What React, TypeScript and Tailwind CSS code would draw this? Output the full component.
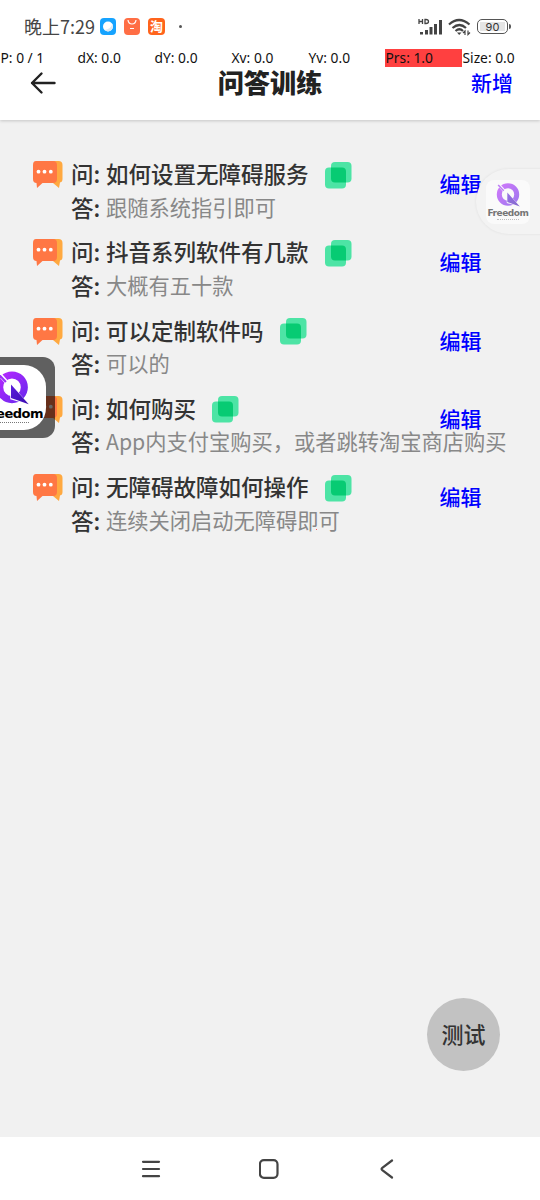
import React from "react";

const items = [
  { q: "如何设置无障碍服务", a: "跟随系统指引即可" },
  { q: "抖音系列软件有几款", a: "大概有五十款" },
  { q: "可以定制软件吗", a: "可以的" },
  { q: "如何购买", a: "App内支付宝购买，或者跳转淘宝商店购买" },
  { q: "无障碍故障如何操作", a: "连续关闭启动无障碍即可" },
];

const metrics = ["P: 0 / 1", "dX: 0.0", "dY: 0.0", "Xv: 0.0", "Yv: 0.0", "Prs: 1.0", "Size: 0.0"];

function ChatIcon() {
  return (
    <svg className="block h-[30px] w-[31px]" viewBox="0 0 31 30">
      <path d="M15 1h11.500q4 0 4 4v14q0 3-2.500 3.500l-1 5.500-6-5H15z" fill="#ffa940" />
      <path d="M4 1h17q4 0 4 4v14q0 4-4 4H10.500L5 28 4.500 23Q1 23 1 19V5q0-4 3-4z" fill="#ff7744" />
      <circle cx="6.500" cy="11.700" r="1.900" fill="#fff" />
      <circle cx="12.500" cy="11.700" r="1.900" fill="#fff" />
      <circle cx="18.800" cy="11.700" r="1.900" fill="#fff" />
    </svg>
  );
}

function CopyIcon() {
  return (
    <svg className="block h-[28px] w-[27px]" viewBox="0 0 27 28">
      <rect x="6" y="1" width="20.500" height="20.500" rx="4" fill="#4de4a5" />
      <rect x="0" y="6.500" width="21" height="21" rx="4" fill="#4de4a5" />
      <path d="M6 6.500h11q4 0 4 4v11H10q-4 0-4-4z" fill="#07cb73" />
    </svg>
  );
}

function Logo({ className }: { className: string }) {
  return (
    <svg className={className} viewBox="0 0 24 24">
      <defs>
        <linearGradient id="ring" x1="0" y1="0" x2="1" y2="1">
          <stop offset="0" stopColor="#b428ff" />
          <stop offset="1" stopColor="#6d28ee" />
        </linearGradient>
        <linearGradient id="tail" x1="0" y1="0" x2="1" y2="1">
          <stop offset="0" stopColor="#5a1cdc" />
          <stop offset="1" stopColor="#3a0cb0" />
        </linearGradient>
      </defs>
      <circle cx="12" cy="11.500" r="8.700" fill="none" stroke="url(#ring)" strokeWidth="5" />
      <path d="M2.500 1.500l8 9" stroke="#fff" strokeWidth="2.800" />
      <path d="M2.200 2l5.500 5.800" stroke="#9a30f8" strokeWidth="1.500" />
      <path d="M10.500 8L24 23.800 10.800 20z" fill="#fff" />
      <path d="M11.300 9.500L23.800 23.500 11.300 19z" fill="url(#tail)" />
    </svg>
  );
}

function StatusBar() {
  return (
    <div className="flex h-[48px] items-center pt-[5px] pl-[24px] pr-[29px] text-[#454545]">
      <span className="mt-[-2px] w-[71px] text-[18px] leading-[24px] whitespace-nowrap">晚上7:29</span>
      <svg className="ml-[5px] h-[17px] w-[16px]" viewBox="0 0 16 17">
        <rect width="16" height="17" rx="4" fill="#16a3ff" />
        <circle cx="8" cy="8.500" r="5" fill="#fff" />
        <path d="M4.500 12Q11 11 12.500 5.500 14 13 8 13.500z" fill="#dce9f4" />
      </svg>
      <svg className="ml-[8px] h-[17px] w-[16px]" viewBox="0 0 16 17">
        <rect width="16" height="17" rx="4" fill="#ff6e45" />
        <path d="M4 2q.5 4 4 4t4-4M6 10.500h4" fill="none" stroke="#fff" strokeWidth="1.200" />
      </svg>
      <div className="ml-[8px] flex h-[17px] w-[17px] items-center justify-center rounded-[4px] bg-[#ff641c] pb-[3px] text-[13px] leading-[13px] font-bold text-white">淘</div>
      <span className="ml-[14px] h-[3px] w-[3px] rounded-full bg-[#555]" />
      <svg className="ml-auto h-[18px] w-[25px]" viewBox="0 0 25 18">
        <path d="M1 1v5M4.500 1v5M1 3.500h3.500M7 1.500v4h1q2.500 0 2.500-2T8 1.500z" fill="none" stroke="#444" strokeWidth="1.300" />
        <path d="M2 14h3v2.500H2zM7 12h3v4.500H7zM11.500 9h3v7.500h-3zM16 6h3v10.500h-3zM21 2h3v14.500h-3z" fill="#444" />
      </svg>
      <svg className="ml-[5px] h-[18px] w-[23px]" viewBox="0 0 23 18">
        <path d="M1 6.500q10-9 20.500 0M4.500 10q7-6 13.500 0M7.500 13q4-3.500 7.500 0" fill="none" stroke="#444" strokeWidth="2.200" />
        <path d="M9 14.500h4.500L11.200 17z" fill="#444" />
        <path d="M17 17v-4l-2 2M20 12.500v4l2-2" fill="none" stroke="#444" strokeWidth="1.200" />
      </svg>
      <div className="ml-[6px] flex h-[15px] w-[31px] items-center justify-center rounded-[5px] border-[1.500px] border-[#555] bg-white p-[2px]">
        <span className="h-full w-full bg-[#e5e5e5] text-center font-['Inter',sans-serif] text-[11px] leading-[10px] text-[#333]">90</span>
      </div>
      <span className="ml-px h-[5px] w-[2px] rounded-r bg-[#555]" />
    </div>
  );
}

export default function App() {
  return (
    <div className="relative flex h-[1200px] w-[540px] flex-col overflow-hidden bg-[#f1f1f1] font-['Noto_Sans_CJK_SC',sans-serif] text-[#333]">
      <header className="z-10 h-[120px] shrink-0 bg-white shadow-[0_1px_3px_rgba(0,0,0,0.18)]">
        <StatusBar />
        <div className="mt-[15px] grid h-[40px] grid-cols-3 items-center pr-[27px] pl-[30px]">
          <svg className="h-[24px] w-[26px]" viewBox="0 0 26 24" fill="none" stroke="#222" strokeWidth="2.400" strokeLinecap="round" strokeLinejoin="round">
            <path d="M24.500 12H2M11.500 2.500L2 12l9.500 9.500" />
          </svg>
          <h1 className="mt-[-3px] ml-[-3px] text-center text-[26.200px] leading-[38px] font-black whitespace-nowrap text-[#222]">问答训练</h1>
          <button className="mt-[-3px] justify-self-end text-[21px] leading-[30px] font-medium whitespace-nowrap text-[#0000ff]">新增</button>
        </div>
      </header>

      <div className="absolute top-[49px] left-0 z-20 flex h-[18px] w-[540px] font-['Noto_Sans',sans-serif] text-[13.800px] leading-[18px] text-[#111]">
        {metrics.map((m) => (
          <span key={m} className={m.startsWith("Prs") ? "w-[77px] shrink-0 bg-[#ff4040] pl-[0.500px] whitespace-nowrap" : "w-[77px] shrink-0 pl-[0.500px] whitespace-nowrap"}>{m}</span>
        ))}
      </div>

      <main className="flex-1 pt-[38px]">
        {items.map((it) => (
          <section key={it.q} className="flex h-[78.300px] pl-[32px]">
            <div className="w-[39px] shrink-0 pt-[2px]"><ChatIcon /></div>
            <div className="w-[369px] shrink-0 whitespace-nowrap">
              <div className="flex h-[33px] items-center">
                <span className="mt-[-2px] w-[35px] shrink-0 text-[22.500px] leading-[33px] font-medium">问:</span>
                <span className="mt-[-2px] mr-[16px] text-[22.500px] leading-[33px] font-medium">{it.q}</span>
                <CopyIcon />
              </div>
              <div className="flex h-[33px] items-center">
                <span className="mt-[-1px] w-[35px] shrink-0 text-[22.500px] leading-[33px] font-medium">答:</span>
                <span className="mt-[-3px] text-[21.250px] leading-[33px] text-[#888]">{it.a}</span>
              </div>
            </div>
            <button className="mt-[10px] ml-[-0.500px] h-[30px] text-[21px] leading-[30px] font-medium text-[#0000ff]">编辑</button>
          </section>
        ))}
      </main>

      <nav className="flex h-[63px] shrink-0 items-center justify-between bg-white pr-[143px] pl-[141px]">
        <svg className="h-[20px] w-[20px]" viewBox="0 0 20 20" fill="none" stroke="#444" strokeWidth="2.200" strokeLinecap="round">
          <path d="M2 2.800h16M2 10h16M2 17.200h16" />
        </svg>
        <svg className="h-[20px] w-[20px]" viewBox="0 0 20 20" fill="none" stroke="#444" strokeWidth="2.200">
          <rect x="0.900" y="1.200" width="17.600" height="17.600" rx="4" />
        </svg>
        <svg className="h-[20px] w-[20px]" viewBox="0 0 20 20" fill="none" stroke="#444" strokeWidth="2.200" strokeLinecap="round">
          <path d="M15 1.500L5.300 8.800q-1.500 1.200 0 2.400L15 18.500" />
        </svg>
      </nav>

      <div className="absolute top-[357px] left-[-27px] z-20 flex h-[81px] w-[82px] items-center rounded-[12px] bg-black/60">
        <div className="flex h-[65px] w-[73px] flex-col items-end overflow-hidden rounded-[22px] bg-white">
          <Logo className="mt-[6px] mr-[17px] h-[34px] w-[34px] shrink-0" />
          <span className="mt-[2px] mr-[3px] font-['DejaVu_Sans',sans-serif] text-[13px] leading-[14px] font-bold tracking-[-0.500px] text-black">Freedom</span>
          <span className="mt-px mr-[17px] w-[34px] border-t border-dotted border-[#777]" />
        </div>
      </div>

      <div className="absolute top-[169px] left-[476px] z-20 flex h-[65px] w-[74px] items-center rounded-l-full bg-[#f3f3f3] pl-[10px] shadow-[0_0_3px_rgba(0,0,0,0.08)]">
        <div className="flex h-[44px] w-[44px] flex-col items-center rounded-[8px] bg-white opacity-60">
          <Logo className="mt-[3px] h-[24px] w-[24px] shrink-0" />
          <span className="font-['DejaVu_Sans',sans-serif] text-[9px] leading-[12px] font-bold tracking-[-0.450px] text-[#222]">Freedom</span>
          <span className="w-[22px] border-t border-dotted border-[#999]" />
        </div>
      </div>

      <button className="absolute top-[998px] left-[427px] z-20 flex h-[73px] w-[73px] items-center justify-center rounded-full bg-[#c2c2c2] pb-[4px] text-[22px] leading-[30px] font-medium text-[#333]">测试</button>
      <span className="absolute top-[529px] left-[316px] z-20 h-px w-px bg-[#f55]" />
    </div>
  );
}
